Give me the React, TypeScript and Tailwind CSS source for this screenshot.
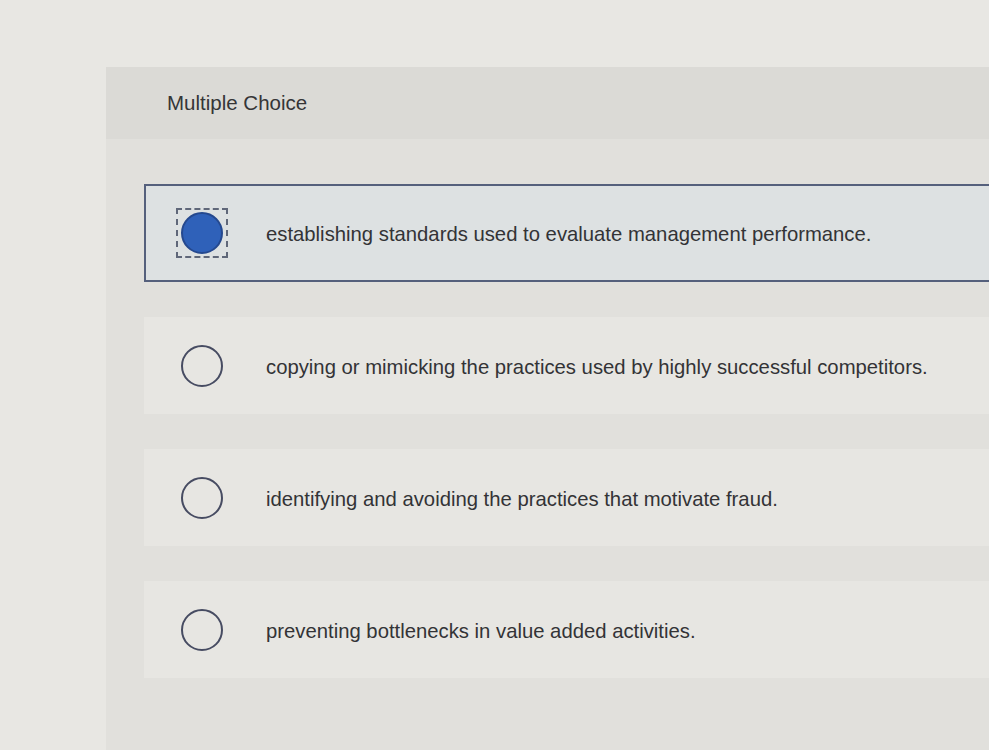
const options = [
  "establishing standards used to evaluate management performance.",
  "copying or mimicking the practices used by highly successful competitors.",
  "identifying and avoiding the practices that motivate fraud.",
  "preventing bottlenecks in value added activities.",
];

function Radio({ checked }: { checked: boolean }) {
  if (checked) {
    return (
      <div className="w-[52px] h-[50px] shrink-0 border-2 border-dashed border-[#5f6779] flex items-center justify-center">
        <div className="w-[42px] h-[42px] rounded-full bg-[#2f61b9] border-2 border-[#25498f]" />
      </div>
    );
  }
  return <div className="w-[42px] h-[42px] shrink-0 rounded-full border-2 border-[#474c62]" />;
}

export default function App() {
  return (
    <div
      className="w-full h-[750px] bg-[#e8e7e3] pl-[106px] pt-[67px] flex overflow-hidden"
      style={{ fontFamily: '"Liberation Sans", Arial, sans-serif' }}
    >
      <div className="flex-1 bg-[#e1e0dc] flex flex-col">
        <div className="h-[72px] bg-[#dbdad6] flex items-center pl-[61px] text-[20.5px] text-[#353537]">
          Multiple Choice
        </div>
        <div className="flex flex-col gap-[35px] pl-[38px] pt-[45px]">
          {options.map((text, i) => {
            const selected = i === 0;
            return (
              <div
                key={text}
                className={
                  selected
                    ? "h-[98px] bg-[#dde1e2] border-2 border-r-0 border-[#55607c] flex items-center pl-[35px]"
                    : "h-[97px] bg-[#e7e6e2] flex items-center pl-[37px]"
                }
              >
                <div className="w-[42px] flex items-center justify-center">
                  <Radio checked={selected} />
                </div>
                <span className="ml-[43px] pt-[3px] text-[20.3px] text-[#333336]">{text}</span>
              </div>
            );
          })}
        </div>
      </div>
    </div>
  );
}
